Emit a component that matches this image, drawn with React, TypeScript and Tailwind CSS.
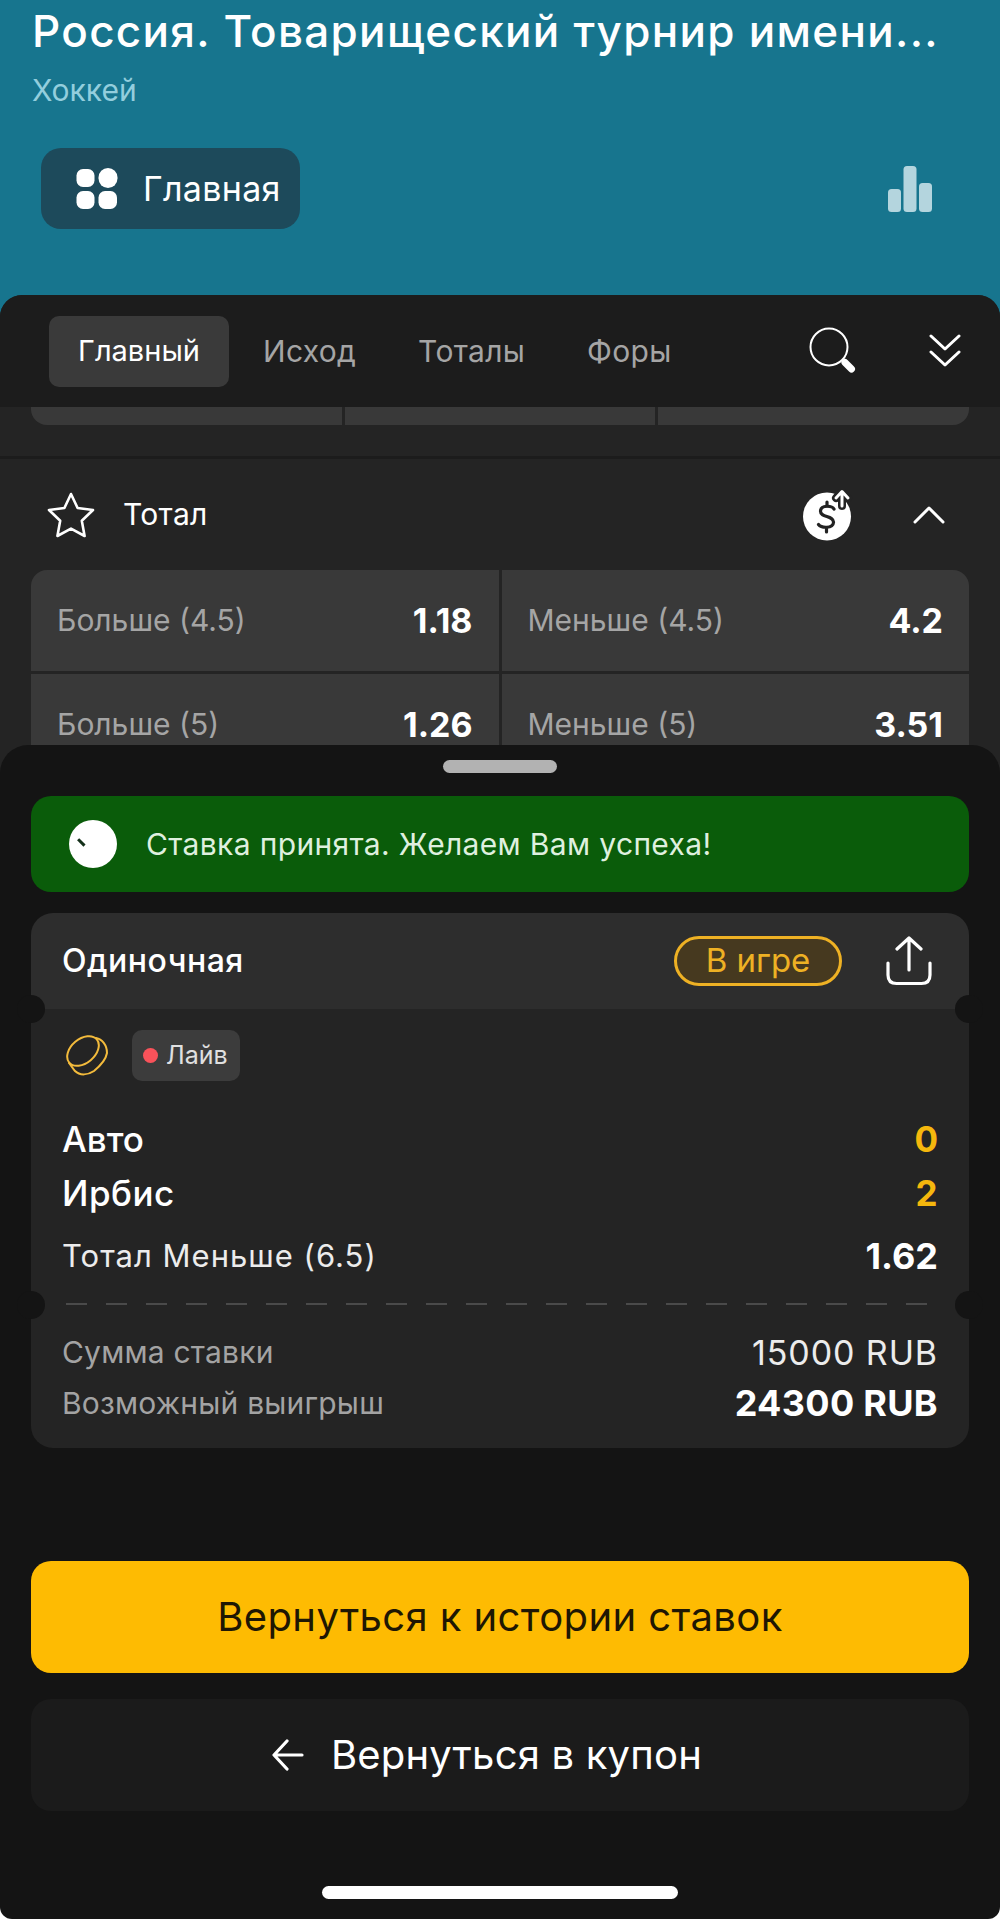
const font = { fontFamily: 'Inter, "Noto Sans", sans-serif' };

function GridIcon() {
  return (
    <svg width="42" height="42" viewBox="0 0 42 42" fill="#fff">
      <rect x="0.5" y="1" width="18" height="18" rx="6.5" />
      <rect x="22.5" y="0" width="19" height="20" rx="9.5" />
      <rect x="0.5" y="23" width="18" height="18" rx="6.5" />
      <rect x="22.5" y="23" width="18.5" height="18" rx="6.5" />
    </svg>
  );
}

function StatsIcon() {
  return (
    <svg width="44" height="46" viewBox="0 0 44 46" fill="#b4d5de">
      <rect x="0" y="23" width="13" height="23" rx="3.5" />
      <rect x="15.5" y="0" width="13" height="46" rx="3.5" />
      <rect x="31" y="17" width="13" height="29" rx="3.5" />
    </svg>
  );
}

function SearchIcon() {
  return (
    <svg width="48" height="48" viewBox="0 0 48 48" fill="none" stroke="#fff" strokeLinecap="round">
      <circle cx="20" cy="20" r="18.5" strokeWidth="2" />
      <path d="M36 35.5 L42.5 42" strokeWidth="7" />
    </svg>
  );
}

function DoubleChevron() {
  return (
    <svg width="32" height="34" viewBox="0 0 32 34" fill="none" stroke="#fff" strokeWidth="3" strokeLinecap="round" strokeLinejoin="round">
      <path d="M2 2 L16 15 L30 2" />
      <path d="M2 18 L16 31 L30 18" />
    </svg>
  );
}

function StarIcon() {
  return (
    <svg width="48" height="46" viewBox="0 0 48 46" fill="none" stroke="#fff" strokeWidth="2.6" strokeLinejoin="round">
      <path d="M24 2 L30.6 16 L46 18 L34.8 28.8 L37.6 44 L24 36.6 L10.4 44 L13.2 28.8 L2 18 L17.4 16 Z" />
    </svg>
  );
}

function CashoutIcon() {
  return (
    <svg width="50" height="52" viewBox="0 0 50 52" fill="none">
      <circle cx="24" cy="27.5" r="24" fill="#fff" />
      <path d="M31 20 C29 16.5 18 15.5 17.5 22 C17 29 31 26 30.5 33.5 C30 40 18 39 15.5 35.5" stroke="#222" strokeWidth="3.2" strokeLinecap="round" />
      <path d="M24 13 V17 M23.5 39 V43" stroke="#222" strokeWidth="3.2" strokeLinecap="round" />
      <path d="M33 9 L39 2.5 L45 9 M39 3 V17" stroke="#242424" strokeWidth="8" strokeLinecap="round" strokeLinejoin="round" />
      <path d="M33 9 L39 2.5 L45 9 M39 3 V17" stroke="#fff" strokeWidth="3" strokeLinecap="round" strokeLinejoin="round" />
    </svg>
  );
}

function ChevronUp() {
  return (
    <svg width="32" height="20" viewBox="0 0 32 20" fill="none" stroke="#fff" strokeWidth="3" strokeLinecap="round" strokeLinejoin="round">
      <path d="M2 17 L16 3 L30 17" />
    </svg>
  );
}

function ShareIcon() {
  return (
    <svg width="46" height="50" viewBox="0 0 46 50" fill="none" stroke="#fff" strokeWidth="3.2" strokeLinecap="round" strokeLinejoin="round">
      <path d="M23 34 V2.5 M11 13 L23 2 L35 13" />
      <path d="M2 27 V39 C2 44.5 5 47.5 10.5 47.5 H35.5 C41 47.5 44 44.5 44 39 V27" />
    </svg>
  );
}

function PuckIcon() {
  return (
    <svg width="42" height="42" viewBox="0 0 42 42" fill="none" stroke="#f3bb3c" strokeWidth="2" strokeLinecap="round">
      <ellipse cx="17" cy="16" rx="18" ry="12" transform="rotate(-40 17 16)" />
      <path d="M30 3 C36 4 41 10 41 18 C40 24 34 31 28 36 C22 40 14 41 9 36 L3 28" />
    </svg>
  );
}

function OddCell({ label, value }: { label: string; value: string }) {
  return (
    <div className="flex h-[101px] flex-1 items-center justify-between bg-[#393939] pl-[26px] pr-[26px]">
      <span className="text-[30px] text-[#a5a5a5]">{label}</span>
      <span className="text-[34px] font-bold text-white">{value}</span>
    </div>
  );
}

function App() {
  return (
    <div className="relative h-[1920px] w-[1000px] overflow-hidden bg-[#17758e]" style={font}>
      {/* шапка */}
      <div className="h-[295px] px-[32px] pt-[6px]">
        <h1 className="whitespace-nowrap text-[44px] leading-[50px] font-medium tracking-[1.3px] text-white">
          Россия. Товарищеский турнир имени...
        </h1>
        <div className="mt-[15px] text-[30px] leading-[38px] text-[#93cedd]">Хоккей</div>
        <div className="mt-[39px] flex items-center justify-between pl-[9px] pr-[36px]">
          <div className="flex h-[81px] w-[259px] items-center gap-[25px] rounded-[20px] bg-[#1d4a5b] pl-[35px]">
            <GridIcon />
            <span className="text-[34px] tracking-[0.3px] text-white">Главная</span>
          </div>
          <StatsIcon />
        </div>
      </div>

      {/* рынки */}
      <div className="h-[520px] overflow-hidden rounded-t-[22px] bg-[#242424]">
        <div className="flex h-[112px] items-center bg-[#1c1c1c] pl-[49px] pr-[39px]">
          <div className="flex h-[71px] w-[180px] items-center justify-center rounded-[10px] bg-[#3a3a3a] text-[29px] text-white">
            Главный
          </div>
          <span className="ml-[34px] text-[30px] tracking-[0.3px] text-[#a5a5a5]">Исход</span>
          <span className="ml-[62px] text-[30px] tracking-[0.3px] text-[#a5a5a5]">Тоталы</span>
          <span className="ml-[62px] text-[30px] tracking-[0.3px] text-[#a5a5a5]">Форы</span>
          <div className="ml-auto flex items-center gap-[72px]">
            <SearchIcon />
            <DoubleChevron />
          </div>
        </div>

        <div className="mx-[31px] flex h-[18px] gap-[3px] overflow-hidden rounded-b-[16px]">
          <div className="flex-1 bg-[#393939]" />
          <div className="flex-1 bg-[#393939]" />
          <div className="flex-1 bg-[#393939]" />
        </div>
        <div className="mt-[31px] h-[3px] bg-[#1c1c1c]" />

        <div className="flex h-[111px] items-center pl-[47px] pr-[55px]">
          <StarIcon />
          <span className="ml-[28px] text-[30px] tracking-[0.3px] text-white">Тотал</span>
          <div className="ml-auto flex items-center gap-[60px]">
            <CashoutIcon />
            <ChevronUp />
          </div>
        </div>

        <div className="mx-[31px] flex flex-col gap-[3px] overflow-hidden rounded-t-[16px]">
          <div className="flex gap-[3px]">
            <OddCell label="Больше (4.5)" value="1.18" />
            <OddCell label="Меньше (4.5)" value="4.2" />
          </div>
          <div className="flex gap-[3px]">
            <OddCell label="Больше (5)" value="1.26" />
            <OddCell label="Меньше (5)" value="3.51" />
          </div>
        </div>
      </div>

      {/* белые уголки экрана под шторкой */}
      <div className="absolute inset-x-0 bottom-0 h-[20px] bg-white" />

      {/* шторка со ставкой */}
      <div className="absolute inset-x-0 top-[745px] bottom-[1px] flex flex-col rounded-t-[28px] rounded-b-[12px] bg-[#141414] px-[31px]">
        <div className="mx-auto mt-[15px] h-[13px] w-[114px] rounded-full bg-[#b2b2b2]" />

        <div className="mt-[23px] flex h-[96px] items-center rounded-[20px] bg-[#0a5c0a] pl-[38px]">
          <div className="relative h-[48px] w-[48px] rounded-full bg-white">
            <div className="absolute top-[21px] left-[8px] h-[2.5px] w-[9px] rotate-45 bg-[#14301a]" />
          </div>
          <span className="ml-[29px] text-[30px] tracking-[0.35px] text-[#dff0df]">Ставка принята. Желаем Вам успеха!</span>
        </div>

        <div className="relative mt-[21px]">
          <div className="flex h-[96px] items-center justify-between rounded-t-[22px] bg-[#2d2d2d] pr-[37px] pl-[31px]">
            <span className="text-[32px] font-medium tracking-[0.5px] text-white">Одиночная</span>
            <div className="flex items-center gap-[44px]">
              <div className="flex h-[50px] w-[168px] items-center justify-center rounded-full border-[3px] border-[#eeb124] bg-[#46391f] text-[33px] text-[#eeb124]">
                В игре
              </div>
              <ShareIcon />
            </div>
          </div>

          <div className="h-[296px] bg-[#242424] px-[31px] pt-[21px]">
            <div className="flex items-center gap-[24px] pl-[4px]">
              <PuckIcon />
              <div className="flex h-[51px] w-[108px] items-center rounded-[10px] bg-[#3c3c3c] pl-[11px] text-[25px] text-[#e0e0e0]">
                <span className="mr-[8px] h-[15px] w-[15px] rounded-full bg-[#f9525a]" />
                Лайв
              </div>
            </div>
            <div className="mt-[31px] flex h-[54px] items-center justify-between text-[35px] font-medium text-white">
              <span>Авто</span>
              <span className="font-bold text-[#f5b70d]">0</span>
            </div>
            <div className="flex h-[54px] items-center justify-between text-[35px] font-medium tracking-[0.5px] text-white">
              <span>Ирбис</span>
              <span className="font-bold text-[#f5b70d]">2</span>
            </div>
            <div className="mt-[9px] flex h-[54px] items-center justify-between text-white">
              <span className="text-[31px] tracking-[1px] text-[#ececec]">Тотал Меньше (6.5)</span>
              <span className="text-[36px] font-bold">1.62</span>
            </div>
          </div>

          <div className="h-[143px] rounded-b-[22px] bg-[#242424] px-[31px] pt-[23px]">
            <div className="flex h-[48px] items-center justify-between">
              <span className="text-[30px] tracking-[0.2px] text-[#a3a3a3]">Сумма ставки</span>
              <span className="text-[34px] tracking-[0.9px] text-[#ececec]">15000 RUB</span>
            </div>
            <div className="mt-[3px] flex h-[48px] items-center justify-between">
              <span className="text-[30px] tracking-[0.2px] text-[#a3a3a3]">Возможный выигрыш</span>
              <span className="text-[36px] font-bold tracking-[0.3px] text-white">24300 RUB</span>
            </div>
          </div>

          {/* пунктир и вырезы билета */}
          <div className="absolute top-[390px] right-[27px] left-[35px] h-[2px] bg-[repeating-linear-gradient(90deg,#4a4a4a_0,#4a4a4a_21px,transparent_21px,transparent_40px)]" />
          <div className="absolute top-[82px] -left-[14px] h-[28px] w-[28px] rounded-full bg-[#141414]" />
          <div className="absolute top-[82px] -right-[14px] h-[28px] w-[28px] rounded-full bg-[#141414]" />
          <div className="absolute top-[378px] -left-[14px] h-[28px] w-[28px] rounded-full bg-[#141414]" />
          <div className="absolute top-[378px] -right-[14px] h-[28px] w-[28px] rounded-full bg-[#141414]" />
        </div>

        <div className="mt-[113px] flex h-[112px] items-center justify-center rounded-[20px] bg-[#febb02] text-[40px] tracking-[0.4px] text-[#1f1703]">
          Вернуться к истории ставок
        </div>
        <div className="mt-[26px] flex h-[112px] items-center justify-center gap-[27px] rounded-[20px] bg-[#1b1b1b] pr-[26px] text-[40px] tracking-[0.2px] text-white">
          <svg width="32" height="32" viewBox="0 0 32 32" fill="none" stroke="#fff" strokeWidth="3.2" strokeLinecap="round" strokeLinejoin="round">
            <path d="M30 16 H2.5 M15 2 L2 16 L15 30" />
          </svg>
          Вернуться в купон
        </div>
        <div className="mx-auto mt-[75px] h-[13px] w-[356px] rounded-full bg-white" />
      </div>
    </div>
  );
}

export default App;
